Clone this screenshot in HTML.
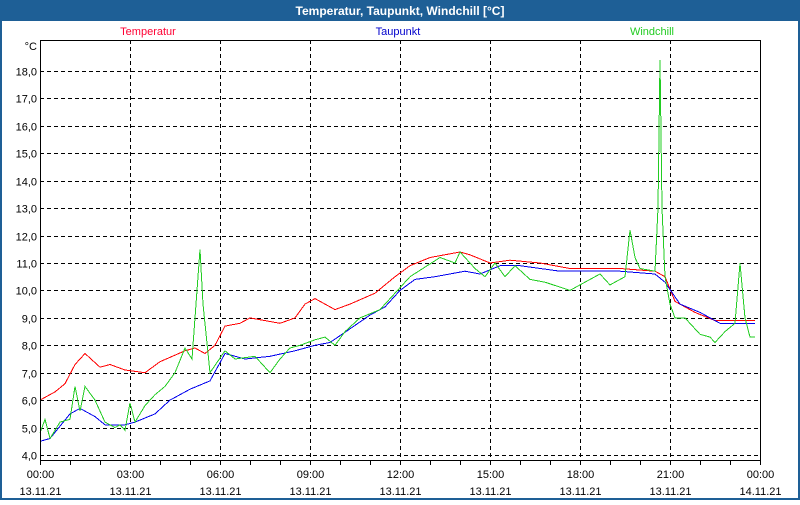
<!DOCTYPE html>
<html><head><meta charset="utf-8"><style>
body{margin:0;width:800px;height:500px;overflow:hidden;background:#fff;font-family:"Liberation Sans",sans-serif}
</style></head><body>
<svg id="s" width="800" height="500" xmlns="http://www.w3.org/2000/svg" font-family="Liberation Sans, sans-serif" font-size="11">
<rect x="0" y="0" width="800" height="500" fill="#fff"/>
<rect x="1" y="1" width="798" height="498" fill="none" stroke="#1e5f96" stroke-width="2"/>
<rect x="0" y="0" width="800" height="21" fill="#1e5f96"/>
<text x="400" y="15" text-anchor="middle" fill="#fff" font-weight="bold" font-size="12">Temperatur, Taupunkt, Windchill [°C]</text>
<text x="148" y="35" text-anchor="middle" fill="#ff0033">Temperatur</text>
<text x="398" y="35" text-anchor="middle" fill="#0000cc">Taupunkt</text>
<text x="652" y="35" text-anchor="middle" fill="#22cc22">Windchill</text>
<text x="37" y="50" text-anchor="end">°C</text>
<g id="g"></g>
<rect x="40.5" y="40.5" width="720" height="420" fill="none" stroke="#000" stroke-width="1"/>
</svg>
<script>
var g=document.getElementById('g'),h='';
function Y(v){return 455-(v-4)*27.43;}
for(var v=4;v<=18;v++){var y=Math.round(Y(v))+0.5;
h+='<line x1="40" x2="760" y1="'+y+'" y2="'+y+'" stroke="#000" stroke-dasharray="4,3"/>';
h+='<text x="37" y="'+(y+4)+'" text-anchor="end">'+v+',0</text>';}
var lab=['00:00','03:00','06:00','09:00','12:00','15:00','18:00','21:00','00:00'];
for(var i=0;i<=24;i++){var x=40+30*i+0.5;h+='<line x1="'+x+'" x2="'+x+'" y1="460" y2="465" stroke="#000"/>';}
for(var i=0;i<9;i++){var x=40+90*i+0.5;
if(i>0&&i<8)h+='<line x1="'+x+'" x2="'+x+'" y1="40" y2="460" stroke="#000" stroke-dasharray="4,3"/>';
h+='<text x="'+x+'" y="478" text-anchor="middle">'+lab[i]+'</text>';
h+='<text x="'+x+'" y="495" text-anchor="middle">'+(i==8?'14.11.21':'13.11.21')+'</text>';}
function pl(d,c){var p=[];for(var i=0;i<d.length;i+=2)p.push(d[i]+','+Y(d[i+1]).toFixed(1));
return '<polyline fill="none" shape-rendering="crispEdges" stroke="'+c+'" stroke-width="1" points="'+p.join(' ')+'"/>';}
var G=[40,4.8,45,5.3,50,4.6,60,5.2,70,5.3,75,6.5,80,5.6,85,6.5,95,6.0,105,5.2,115,5.0,120,5.1,125,4.9,130,5.9,135,5.2,145,5.8,155,6.2,165,6.5,175,7.0,185,7.9,192,7.5,200,11.5,203,9.5,210,7.0,225,7.8,235,7.5,255,7.6,270,7.0,280,7.5,290,7.9,300,8.0,315,8.2,325,8.3,335,8.0,345,8.5,360,9.0,380,9.3,400,10.1,410,10.5,440,11.2,455,11.0,460,11.4,475,10.8,485,10.5,495,11.0,505,10.5,515,10.9,530,10.4,545,10.3,570,10.0,580,10.2,600,10.6,610,10.2,625,10.5,630,12.2,635,11.2,640,10.8,655,10.7,658,13,660,18.4,662,13,665,10.5,670,9.5,675,9.0,685,9.0,700,8.4,710,8.3,715,8.1,725,8.5,735,8.8,740,11.0,745,9.0,750,8.3,755,8.3];
var B=[40,4.5,50,4.6,70,5.5,80,5.7,95,5.4,105,5.1,125,5.1,135,5.2,155,5.5,170,6.0,190,6.4,210,6.7,225,7.7,245,7.5,270,7.6,295,7.8,315,8.0,330,8.1,350,8.6,370,9.1,385,9.4,400,10.0,415,10.4,435,10.5,465,10.7,480,10.6,500,10.9,520,10.9,560,10.7,620,10.7,655,10.6,665,10.3,680,9.5,700,9.2,720,8.8,755,8.8];
var R=[40,6.0,55,6.3,65,6.6,75,7.3,85,7.7,100,7.2,110,7.3,125,7.1,145,7.0,160,7.4,185,7.8,195,7.9,205,7.7,215,8.0,225,8.7,240,8.8,250,9.0,265,8.9,280,8.8,295,9.0,305,9.5,315,9.7,335,9.3,350,9.5,375,9.9,395,10.5,410,10.9,430,11.2,460,11.4,470,11.3,490,11.0,510,11.1,540,11.0,570,10.8,620,10.8,655,10.7,665,10.5,675,9.6,695,9.2,715,8.9,755,8.9];
h+=pl(R,'#ff0000')+pl(B,'#0000ee')+pl(G,'#22cc22');
g.innerHTML=h;
</script>
</body></html>
